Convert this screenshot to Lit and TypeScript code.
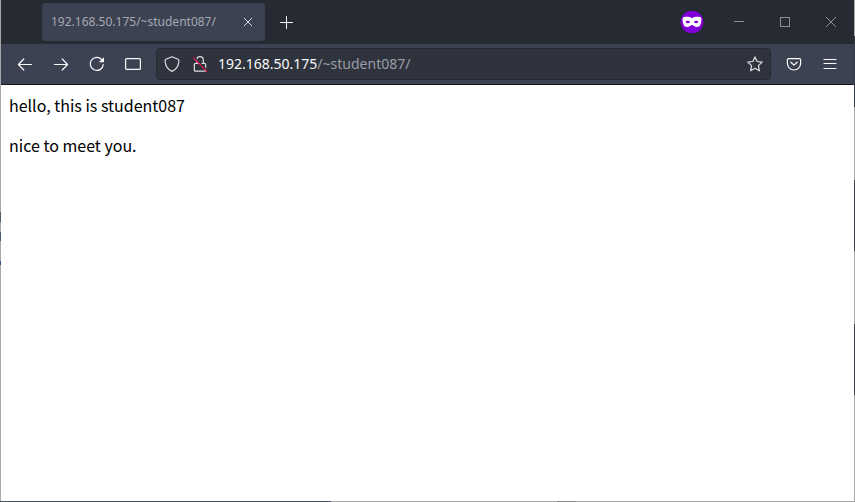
import { LitElement, html, css, svg } from "lit";
import { customElement, state } from "lit/decorators.js";

const icon = (body: unknown, size = 16) => html`
  <svg class="icon" width=${size} height=${size} viewBox="0 0 ${size} ${size}" aria-hidden="true">${body}</svg>
`;

const icons = {
  back: svg`<path d="M14.6 8.5H1.6M6.800 3L1.400 8.500L6.800 14"/>`,
  forward: svg`<path d="M1.4 8.500H14.400M9.200 3L14.600 8.500L9.200 14"/>`,
  reload: svg`<path d="M14.300 8.500A6.500 6.500 0 1 1 12.600 3.500"/><path class="solid" d="M15 1.200V6.200H9.800Z"/>`,
  panel: svg`<rect x="0.6" y="2.6" width="14.8" height="10.800" rx="1"/>`,
  shield: svg`<path d="M8 .8L14 3.2C14.8 3.5 15 4 14.9 5.2C14.6 9.6 12.2 13.5 8 15.4C3.8 13.5 1.4 9.6 1.1 5.2C1 4 1.200 3.500 2 3.200Z"/>`,
  lock: svg`<path d="M4.700 7.500V4A3.300 3.300 0 0 1 11.300 4V7.500M3.200 7.500H12.800Q13.600 7.500 13.600 8.300V14.400Q13.600 15.200 12.800 15.200H3.200Q2.400 15.200 2.400 14.400V8.300Q2.400 7.500 3.200 7.500Z"/><path class="cover" d="M2.500 1.400L15.500 14.400"/><path class="slash" d="M1.200 1.800L14.800 15.400"/>`,
  star: svg`<path d="M8 .9L10.100 5.500L15.200 6.100L11.400 9.600L12.400 14.800L8 12.300L3.600 14.800L4.600 9.600L.8 6.100L5.900 5.500Z"/>`,
  pocket: svg`<path d="M2.400 2.600H13.600Q14.600 2.600 14.600 3.600V7.400A6.600 6.600 0 0 1 1.400 7.400V3.600Q1.400 2.600 2.400 2.600Z"/><path d="M4.900 6.200L8 9.100L11.100 6.200"/>`,
  menu: svg`<path d="M2 3.500H14M2 7.500H14M2 12.500H14"/>`,
  plus: svg`<path d="M8.500 2.500V14.500M2.500 8.500H14.500"/>`,
  closeTab: svg`<path d="M4.200 4.200L11.800 11.800M11.800 4.200L4.200 11.800"/>`,
  minimize: svg`<path d="M3 7.500H13"/>`,
  maximize: svg`<rect x="3.500" y="3.500" width="9" height="9"/>`,
  closeWindow: svg`<path d="M3 3L13 13M13 3L3 13"/>`,
  mask: svg`<circle class="disc" cx="12" cy="12" r="11.300"/>
    <path class="face" d="M12 8.300C14 6.600 18 6.400 20.500 7.200C21.800 7.800 21.500 11 20.900 13.200C20.100 16 18.400 17.200 16.200 17C14.200 16.800 13.500 15 12 15C10.500 15 9.800 16.800 7.800 17C5.600 17.200 3.900 16 3.100 13.200C2.500 11 2.200 7.800 3.500 7.200C6 6.400 10 6.600 12 8.300Z"/>
    <path class="eye" d="M5.500 12C6.600 10.200 9 10.200 10.200 12C9 13.600 6.600 13.600 5.500 12ZM18.500 12C17.400 10.200 15 10.200 13.800 12C15 13.600 17.400 13.600 18.500 12Z"/>`,
};

@customElement("app-root")
export class AppRoot extends LitElement {
  @state() private host = "192.168.50.175";
  @state() private path = "/~student087/";

  static styles = css`
    :host {
      display: block;
      font-family: "Noto Sans", "Open Sans", sans-serif;
    }
    * {
      box-sizing: border-box;
    }
    .window {
      min-height: 100vh;
      display: flex;
      flex-direction: column;
      padding: 0 1px 1px;
      background:
        linear-gradient(#a8a8a8 36px, #343a48 36px 107px, #a8a8a8 107px 180px, #3f444c 180px 251px, #a8a8a8 251px 324px, #3f444c 324px 395px, #a8a8a8 395px) right / 1px 100% no-repeat,
        linear-gradient(90deg, #4c5662 331px, #a8a8a8 331px 557px, #868686 557px 576px, #a8a8a8 576px) bottom / 100% 1px no-repeat,
        linear-gradient(#a8a8a8 212px, #4c5c6c 212px 222px, #a8a8a8 222px 232px, #4c5c6c 232px 241px, #a8a8a8 241px 261px, #34507c 261px 265px, #a8a8a8 265px) left / 1px 100% no-repeat;
    }
    .icon {
      display: block;
      fill: none;
      stroke: currentColor;
      stroke-width: 1.2;
      stroke-linecap: round;
      stroke-linejoin: round;
    }
    .solid {
      fill: currentColor;
      stroke: none;
    }
    .cover {
      stroke: #2f333e;
    }
    .slash {
      stroke: #e2164d;
    }
    .disc {
      fill: #8000d7;
      stroke: none;
    }
    .face {
      fill: #fff;
      stroke: none;
    }
    .eye {
      fill: #8000d7;
      stroke: none;
    }
    button {
      display: flex;
      align-items: center;
      justify-content: center;
      flex: none;
      width: 36px;
      height: 32px;
      padding: 0;
      border: 0;
      border-radius: 4px;
      background: none;
      color: #f9f9fa;
    }
    .titlebar {
      display: flex;
      align-items: center;
      height: 44px;
      padding-left: 41px;
      background: #252a33;
    }
    .tab {
      display: flex;
      align-items: center;
      justify-content: space-between;
      flex: 0 1 223px;
      height: 38px;
      padding: 0 5px 0 9px;
      border-radius: 4px;
      background: #3c4252;
      color: #a6a9b1;
      font-size: 12px;
      line-height: 16px;
    }
    .tab button {
      width: 24px;
      height: 24px;
      color: #d8d9dd;
    }
    .new-tab .icon,
    .tab .icon,
    .controls .icon {
      stroke-width: 1;
    }
    .new-tab {
      margin-left: 3px;
    }
    .private {
      margin-left: auto;
      margin-right: 12px;
    }
    .controls {
      display: flex;
    }
    .controls button {
      width: 46px;
      height: 44px;
      border-radius: 0;
      color: #8a8d94;
    }
    .controls .icon {
      stroke-linecap: butt;
      stroke-linejoin: miter;
      shape-rendering: crispEdges;
    }
    .toolbar {
      display: flex;
      align-items: center;
      height: 41px;
      padding: 0 6px;
      border-bottom: 1px solid #14161f;
      background: #3c4252;
    }
    .address {
      display: flex;
      align-items: center;
      flex: 1;
      min-width: 0;
      height: 32px;
      margin: 0 5px;
      padding-left: 7px;
      border: 1px solid #262a33;
      border-radius: 4px;
      background: #2f333e;
      color: #9a9da5;
      font-size: 14px;
      line-height: 20px;
    }
    .address button {
      width: 28px;
      height: 28px;
      color: #dedfe2;
    }
    .address button:first-child {
      width: 16px;
      margin-right: 6px;
    }
    .address .star {
      width: 30px;
      margin-left: auto;
    }
    .url {
      margin-left: 4px;
      color: inherit;
      text-decoration: none;
    }
    .host {
      color: #f9f9fa;
    }
    .page {
      flex: 1;
      padding: 8px;
      background: #fff;
      color: #000;
      font-family: "Noto Sans CJK JP", sans-serif;
      font-size: 16px;
      line-height: 24px;
    }
    .page p {
      margin: 0 0 16px;
    }
  `;

  render() {
    return html`
      <div class="window">
        <header class="titlebar">
          <div class="tab">
            <span>${this.host}${this.path}</span>
            <button aria-label="Close tab">${icon(icons.closeTab)}</button>
          </div>
          <button class="new-tab" aria-label="New tab">${icon(icons.plus)}</button>
          <div class="private">${icon(icons.mask, 24)}</div>
          <div class="controls">
            <button aria-label="Minimize">${icon(icons.minimize)}</button>
            <button aria-label="Maximize">${icon(icons.maximize)}</button>
            <button aria-label="Close">${icon(icons.closeWindow)}</button>
          </div>
        </header>
        <nav class="toolbar">
          <button aria-label="Back">${icon(icons.back)}</button>
          <button aria-label="Forward">${icon(icons.forward)}</button>
          <button aria-label="Reload">${icon(icons.reload)}</button>
          <button aria-label="Sidebar">${icon(icons.panel)}</button>
          <div class="address">
            <button aria-label="Tracking protection">${icon(icons.shield)}</button>
            <button aria-label="Connection not secure">${icon(icons.lock)}</button>
            <a class="url" href="#"><span class="host">${this.host}</span>${this.path}</a>
            <button class="star" aria-label="Bookmark">${icon(icons.star)}</button>
          </div>
          <button aria-label="Save to Pocket">${icon(icons.pocket)}</button>
          <button aria-label="Menu">${icon(icons.menu)}</button>
        </nav>
        <main class="page">
          <p>hello, this is student087</p>
          <p>nice to meet you.</p>
        </main>
      </div>
    `;
  }
}
